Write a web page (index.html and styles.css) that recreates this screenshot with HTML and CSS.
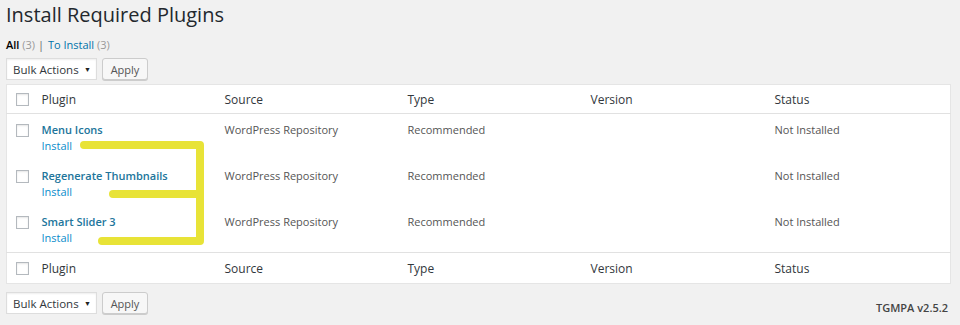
FILE: index.html
```html
<!DOCTYPE html>
<html lang="en">
<head>
    <meta charset="UTF-8">
    <title>Install Required Plugins</title>
    <link rel="stylesheet" href="styles.css">
</head>
<body>
    <div class="wrap">
        <h1>Install Required Plugins</h1>

        <ul class="subsubsub">
            <li><a href="#" class="current">All <span class="count">(3)</span></a> |</li>
            <li><a href="#">To Install <span class="count">(3)</span></a></li>
        </ul>

        <div class="tablenav">
            <div class="select">Bulk Actions <span class="arrow">&#9660;</span></div>
            <button class="button">Apply</button>
        </div>

        <table class="plugins">
            <colgroup>
                <col class="col-cb">
                <col class="col-name">
                <col class="col-source">
                <col class="col-type">
                <col class="col-version">
                <col>
            </colgroup>
            <thead>
                <tr>
                    <td class="cb"><span class="check"></span></td>
                    <th>Plugin</th>
                    <th>Source</th>
                    <th>Type</th>
                    <th>Version</th>
                    <th>Status</th>
                </tr>
            </thead>
            <tbody>
                <tr>
                    <td class="cb"><span class="check"></span></td>
                    <td><a href="#" class="name">Menu Icons</a><a href="#" class="install">Install</a></td>
                    <td>WordPress Repository</td>
                    <td>Recommended</td>
                    <td></td>
                    <td>Not Installed</td>
                </tr>
                <tr>
                    <td class="cb"><span class="check"></span></td>
                    <td><a href="#" class="name">Regenerate Thumbnails</a><a href="#" class="install">Install</a></td>
                    <td>WordPress Repository</td>
                    <td>Recommended</td>
                    <td></td>
                    <td>Not Installed</td>
                </tr>
                <tr>
                    <td class="cb"><span class="check"></span></td>
                    <td><a href="#" class="name">Smart Slider 3</a><a href="#" class="install">Install</a></td>
                    <td>WordPress Repository</td>
                    <td>Recommended</td>
                    <td></td>
                    <td>Not Installed</td>
                </tr>
            </tbody>
            <tfoot>
                <tr>
                    <td class="cb"><span class="check"></span></td>
                    <th>Plugin</th>
                    <th>Source</th>
                    <th>Type</th>
                    <th>Version</th>
                    <th>Status</th>
                </tr>
            </tfoot>
        </table>

        <div class="bottom">
            <div class="tablenav">
                <div class="select">Bulk Actions <span class="arrow">&#9660;</span></div>
                <button class="button">Apply</button>
            </div>
            <p class="version">TGMPA v2.5.2</p>
        </div>
    </div>

    <!-- highlighter marks drawn over the table -->
    <svg class="marker" width="960" height="325" viewBox="0 0 960 325">
        <path d="M84 145 H200 V241 M113 194 H200 M102 241 H200" fill="none" stroke="#e8e337" stroke-width="8" stroke-linecap="round" stroke-linejoin="round"/>
    </svg>
</body>
</html>
```

FILE: styles.css
```css
body {
    margin: 0;
    background-color: #f1f1f1;
    color: #444;
    font-family: "Open Sans", sans-serif;
    font-size: 11px;
    position: relative;
}

.wrap {
    padding: 0 9px 0 6px;
}

h1 {
    margin: 0;
    padding: 1px 0 0;
    font-size: 20px;
    font-weight: 400;
    line-height: 28px;
    color: #23282d;
}

.subsubsub {
    list-style: none;
    margin: 8px 0 0;
    padding: 0;
    display: flex;
    gap: 4px;
    line-height: 16px;
    color: #666;
}

.subsubsub a {
    color: #0073aa;
    text-decoration: none;
}

.subsubsub a.current {
    color: #000;
    font-weight: 600;
}

.subsubsub .count {
    color: #999;
    font-weight: 400;
}

.tablenav {
    display: flex;
    gap: 5px;
    margin-top: 5px;
}

.select {
    box-sizing: border-box;
    width: 91px;
    height: 22px;
    padding: 0 5px 0 6px;
    display: flex;
    align-items: center;
    justify-content: space-between;
    background-color: #fff;
    border: 1px solid #ddd;
    box-shadow: inset 0 1px 2px rgba(0, 0, 0, 0.07);
    color: #32373c;
    font-size: 11.5px;
}

.select .arrow {
    font-size: 7px;
    color: #222;
}

.button {
    box-sizing: border-box;
    height: 22px;
    width: 46px;
    padding: 0;
    background-color: #f7f7f7;
    border: 1px solid #ccc;
    border-radius: 3px;
    box-shadow: 0 1px 0 #ccc;
    color: #555;
    font-family: "Open Sans", sans-serif;
    font-size: 11px;
}

.plugins {
    width: 945px;
    margin-top: 4px;
    border: 1px solid #e5e5e5;
    border-collapse: collapse;
    table-layout: fixed;
    background-color: #fff;
}

.col-cb { width: 27px; }
.col-name { width: 183px; }
.col-source { width: 183px; }
.col-type { width: 183px; }
.col-version { width: 184px; }

.plugins th {
    text-align: left;
    font-weight: 400;
    font-size: 12px;
    color: #32373c;
    padding: 0 8px;
    height: 28px;
}

.plugins td {
    padding: 8px 8px 0;
    vertical-align: top;
    height: 38px;
    line-height: 16px;
    color: #555;
}

.plugins thead tr {
    border-bottom: 1px solid #e1e1e1;
}

.plugins tfoot tr {
    border-top: 1px solid #e1e1e1;
}

.plugins tfoot th {
    height: 30px;
}

.plugins thead td.cb,
.plugins tfoot td.cb {
    height: 28px;
    padding-top: 0;
    vertical-align: middle;
}

.plugins td.cb {
    padding-left: 9px;
    padding-right: 0;
}

.check {
    display: block;
    box-sizing: border-box;
    width: 13px;
    height: 13px;
    margin-top: 2px;
    border: 1px solid #b4b9be;
    box-shadow: inset 0 1px 2px rgba(0, 0, 0, 0.1);
    background-color: #fff;
}

.plugins thead .check,
.plugins tfoot .check {
    margin-top: 0;
}

.plugins .name {
    display: block;
    color: #21759b;
    font-weight: 600;
    text-decoration: none;
}

.plugins .install {
    display: block;
    color: #0a8ccb;
    text-decoration: none;
}

.bottom {
    display: flex;
    justify-content: space-between;
    align-items: flex-start;
}

.bottom .tablenav {
    margin-top: 8px;
}

.version {
    margin: 16px 3px 0 0;
    font-size: 11px;
    font-weight: 600;
    color: #444;
}

.marker {
    position: absolute;
    left: 0;
    top: 0;
    pointer-events: none;
}
```
